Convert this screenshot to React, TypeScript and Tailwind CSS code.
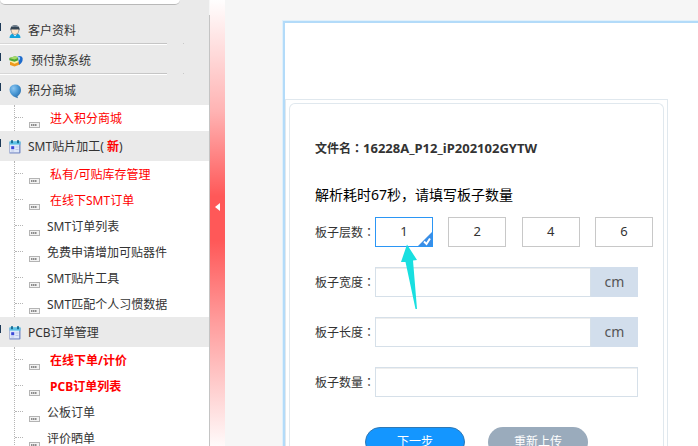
import type { ReactNode } from "react";

const FONT = "font-['Noto_Sans','Noto_Sans_CJK_SC',sans-serif]";
const PUNCTUATION = "font-['Noto_Sans_CJK_TC',sans-serif]";

function PersonIcon() {
  return (
    <svg width="12" height="13" viewBox="0 0 12 13" aria-hidden="true">
      <path d="M0.5 13 Q0.5 8.6 6 8.6 Q11.5 8.6 11.5 13 Z" fill="#12a2dc" />
      <path d="M4 9 L6 11.5 L8 9 Z" fill="#fff" />
      <ellipse cx="6" cy="5.8" rx="3.8" ry="3.8" fill="#fbe3c8" stroke="#6a7078" strokeWidth="0.6" />
      <path d="M1.4 5.6 Q0.8 0.4 6 0.3 Q11.2 0.4 10.6 5.6 L9.4 4.2 Q6 4.8 2.6 4.2 Z" fill="#344453" />
      <path d="M3 1.6 Q6 0.6 9 1.6" stroke="#8da0b0" strokeWidth="0.8" fill="none" />
    </svg>
  );
}

function MoneyIcon() {
  return (
    <svg width="14" height="12" viewBox="0 0 14 12" aria-hidden="true">
      <path d="M1 7 L6 5.5 L11 7 V9.5 L5.5 11.5 L1 10 Z" fill="#ef9a1d" />
      <path d="M1 6.5 L6 5 L11 6.5 L5.5 8.8 Z" fill="#fff0a6" />
      <path d="M0.3 3 L6 1.2 L10 2.6 V5 L5.5 6.8 L0.3 5.2 Z" fill="#4ea634" />
      <path d="M0.3 3 L6 1.2 L10 2.6 L5.5 4.6 Z" fill="#a7d96b" />
      <path d="M8.6 1.4 Q13.5 0 13.7 3.5 Q13.8 8 10 9.8 L9.4 5 Z" fill="#1f6ccc" />
      <path d="M8.8 1.8 Q11.4 1.4 11.2 4 L9.6 6 Z" fill="#a9d2fa" />
    </svg>
  );
}

function BalloonIcon() {
  return (
    <svg width="13" height="15" viewBox="0 0 13 15" aria-hidden="true">
      <defs>
        <radialGradient id="balloon" cx="35%" cy="28%" r="75%">
          <stop offset="0" stopColor="#8cc6f1" />
          <stop offset="0.55" stopColor="#4a98d4" />
          <stop offset="1" stopColor="#2d70ad" />
        </radialGradient>
      </defs>
      <path d="M6 0.5 Q11.8 0.5 12 6 Q12 10 8.4 12.4 L9 14.2 L7 13.6 Q0.6 11.4 0.5 5.6 Q0.8 0.8 6 0.5 Z" fill="url(#balloon)" />
    </svg>
  );
}

function CalendarIcon() {
  return (
    <svg width="12" height="14" viewBox="0 0 12 14" aria-hidden="true">
      <path d="M0.5 2 H11.5 V12.5 Q11.5 13.5 10.5 13.5 H0.5 Z" fill="#7588c4" />
      <rect x="1" y="4" width="9.2" height="8.4" fill="#dfe8fa" />
      <rect x="0.5" y="1.2" width="11" height="3.4" fill="#5cc3e6" />
      <rect x="2" y="0.2" width="2" height="3" fill="#1b6f96" />
      <rect x="8" y="0.2" width="2" height="3" fill="#1b6f96" />
      <rect x="2.2" y="6.2" width="3" height="3" fill="#3b48d6" />
      <path d="M6.5 7 H9.5 M6.5 9.5 H9.5 M2.2 11 H5.2" stroke="#bfc9e6" />
    </svg>
  );
}

function LeafIcon() {
  return (
    <svg width="11" height="6" viewBox="0 0 11 6" className="mt-[17px] shrink-0" aria-hidden="true">
      <rect x="0.5" y="0.5" width="10" height="5" fill="#f3f3f3" stroke="#b4b4b4" />
      <path d="M2 3 H8" stroke="#8c8c8c" strokeWidth="2" strokeDasharray="1.5 0.5" />
    </svg>
  );
}

type HeadingProps = { icon: ReactNode; children: ReactNode; divider?: boolean };

function Heading({ icon, children, divider }: HeadingProps) {
  return (
    <h2 className="h-[30px] bg-[#eaeaea]">
      <a href="#" className="flex h-7 items-center text-[#333]">
        <span className="-mt-1 mr-2 h-2 w-px bg-[#1d3a58]" />
        <span className="mt-1 mr-[5px] flex min-w-[14px]">{icon}</span>
        <span className="mt-1 whitespace-pre">{children}</span>
      </a>
      {divider && (
        <span className="flex h-[2px] items-start gap-4">
          <span className="h-[2px] w-[167px] border-b border-white bg-linear-to-r from-[#d8d8d8] to-[#c4c4c4]" />
          <span className="h-px w-px bg-[#c8c8c8]" />
        </span>
      )}
    </h2>
  );
}

type Leaf = { text: string; tone?: "red" | "bold" };

function Leaves({ items }: { items: Leaf[] }) {
  return (
    <ul className="ml-[14px] border-l border-dotted border-[#b5b5b5]">
      {items.map((item) => (
        <li key={item.text} className="flex h-[26px]">
          <span className="mt-3 mr-[6px] h-px w-2 shrink-0 border-t border-dotted border-[#b5b5b5]" />
          <LeafIcon />
          <a
            href="#"
            className={
              item.tone === "bold"
                ? "pl-[10px] leading-7 font-bold text-[#f00]"
                : item.tone === "red"
                  ? "pl-[10px] leading-7 text-[#f00]"
                  : "pl-[7px] leading-7 text-[#333]"
            }
          >
            {item.text}
          </a>
        </li>
      ))}
    </ul>
  );
}

function Sidebar() {
  return (
    <nav className="w-[209px] shrink-0 overflow-hidden bg-white text-xs">
      <div className="h-[15px] bg-[#eaeaea]">
        <div className="h-[5px] w-[180px] rounded-b-xl border-b border-[#b8b8b8] bg-white" />
      </div>
      <Heading icon={<PersonIcon />} divider>客户资料</Heading>
      <Heading icon={<MoneyIcon />} divider> 预付款系统</Heading>
      <Heading icon={<BalloonIcon />}>积分商城</Heading>
      <Leaves items={[{ text: "进入积分商城", tone: "red" }]} />
      <Heading icon={<CalendarIcon />}>
        SMT贴片加工( <b className="text-[#f00]">新</b>)
      </Heading>
      <Leaves
        items={[
          { text: "私有/可贴库存管理", tone: "red" },
          { text: "在线下SMT订单", tone: "red" },
          { text: "SMT订单列表" },
          { text: "免费申请增加可贴器件" },
          { text: "SMT贴片工具" },
          { text: "SMT匹配个人习惯数据" },
        ]}
      />
      <Heading icon={<CalendarIcon />}>PCB订单管理</Heading>
      <Leaves
        items={[
          { text: "在线下单/计价", tone: "bold" },
          { text: "PCB订单列表", tone: "bold" },
          { text: "公板订单" },
          { text: "评价晒单" },
        ]}
      />
    </nav>
  );
}

function LayerChoice({ value }: { value: string }) {
  const first = value === "1";
  return (
    <label className="relative flex h-[30px] w-[58px] items-center justify-center border border-[#c8c8c8] bg-white text-[13px] text-[#333] has-checked:border-[#2b96f5]">
      <input type="radio" name="layers" value={value} defaultChecked={first} className="peer sr-only" />
      {value}
      <svg width="14" height="14" viewBox="0 0 14 14" className="absolute right-0 bottom-0 hidden peer-checked:block" aria-hidden="true">
        <path d="M14 0 V14 H0 Z" fill="#3a8ee6" />
        <path d="M6 9.5 L8.5 12 L12 6.5" fill="none" stroke="#fff" strokeWidth="2" />
      </svg>
      {first && (
        <svg width="18" height="68" viewBox="0 0 18 68" className="pointer-events-none absolute top-[26px] left-6 z-10" aria-hidden="true">
          <path d="M7 0.5 L17 16 L13 16.5 L17 65 L15.5 65 L5.5 18 L1 18 Z" fill="#19dfe0" />
        </svg>
      )}
    </label>
  );
}

function Field({ id, label, unit }: { id: string; label: string; unit?: string }) {
  return (
    <div className="flex h-[30px] items-center">
      <label htmlFor={id} className="w-[60px] shrink-0 leading-5 whitespace-nowrap">
        {label}<span className={PUNCTUATION}>：</span>
      </label>
      <div className="flex h-full w-[263px]">
        <input id={id} type="text" className="h-full min-w-0 flex-1 border border-[#d6e0e9] bg-white px-2 shadow-[inset_0_1px_0_#eeeeee] outline-none" />
        {unit && (
          <span className="flex w-[47px] items-center justify-center bg-[#d2deec] text-sm text-[#555]">{unit}</span>
        )}
      </div>
    </div>
  );
}

export default function App() {
  return (
    <div className={`flex h-screen overflow-hidden bg-[#f6f6f6] text-xs text-[#333] ${FONT}`}>
      <Sidebar />
      <div className="flex w-4 shrink-0">
        <div className="mt-[15px] w-px bg-[#c4c4c4]" />
        <button
          type="button"
          aria-label="收起菜单"
          className="flex flex-1 items-center justify-center bg-[linear-gradient(#fffefe,#ffb3b3_25%,#ff5858_44%,#ff5858_54%,#ff9c9c_72%,#fffafa)]"
        >
          <svg width="5" height="8" viewBox="0 0 5 8" className="-mt-8" aria-hidden="true">
            <path d="M5 0 V8 L0 4 Z" fill="#fff" />
          </svg>
        </button>
      </div>
      <main className="min-w-0 flex-1 pt-[21px] pl-[58px]">
        <div className="h-full border-t-2 border-l-2 border-[#b3dbf9] bg-white pt-[76px] shadow-[0_0_0_1px_#e0f0fb]">
          <div className="h-full max-w-[383px] border border-b-0 border-[#e0e8ee] px-[3px] pt-[3px]">
            <form className="h-full rounded-t-md border border-b-0 border-[#e0e8ee] px-[25px]">
              <p className="pt-[34px] leading-5 font-bold whitespace-nowrap">
                文件名<span className={PUNCTUATION}>：</span>
                <span className="text-[13px]">16228A_P12_iP202102GYTW</span>
              </p>
              <p className="mt-6 text-sm leading-6 whitespace-nowrap text-black">解析耗时67秒，请填写板子数量</p>
              <fieldset aria-label="板子层数" className="mt-[10px] flex h-[30px] items-center">
                <span className="w-[60px] shrink-0 leading-5 whitespace-nowrap">
                  板子层数<span className={PUNCTUATION}>：</span>
                </span>
                <div className="flex w-[278px] shrink-0 justify-between">
                  <LayerChoice value="1" />
                  <LayerChoice value="2" />
                  <LayerChoice value="4" />
                  <LayerChoice value="6" />
                </div>
              </fieldset>
              <div className="mt-5 flex flex-col gap-5">
                <Field id="board-width" label="板子宽度" unit="cm" />
                <Field id="board-length" label="板子长度" unit="cm" />
                <Field id="board-count" label="板子数量" />
              </div>
              <div className="mt-[30px] flex gap-[23px] pl-[50px] text-white">
                <button type="submit" className="h-[30px] w-[100px] rounded-full border border-[#3079b5] bg-[#1496ff]">下一步</button>
                <button type="button" className="h-[30px] w-[100px] rounded-full bg-[#9aabbc]">重新上传</button>
              </div>
            </form>
          </div>
        </div>
      </main>
    </div>
  );
}
